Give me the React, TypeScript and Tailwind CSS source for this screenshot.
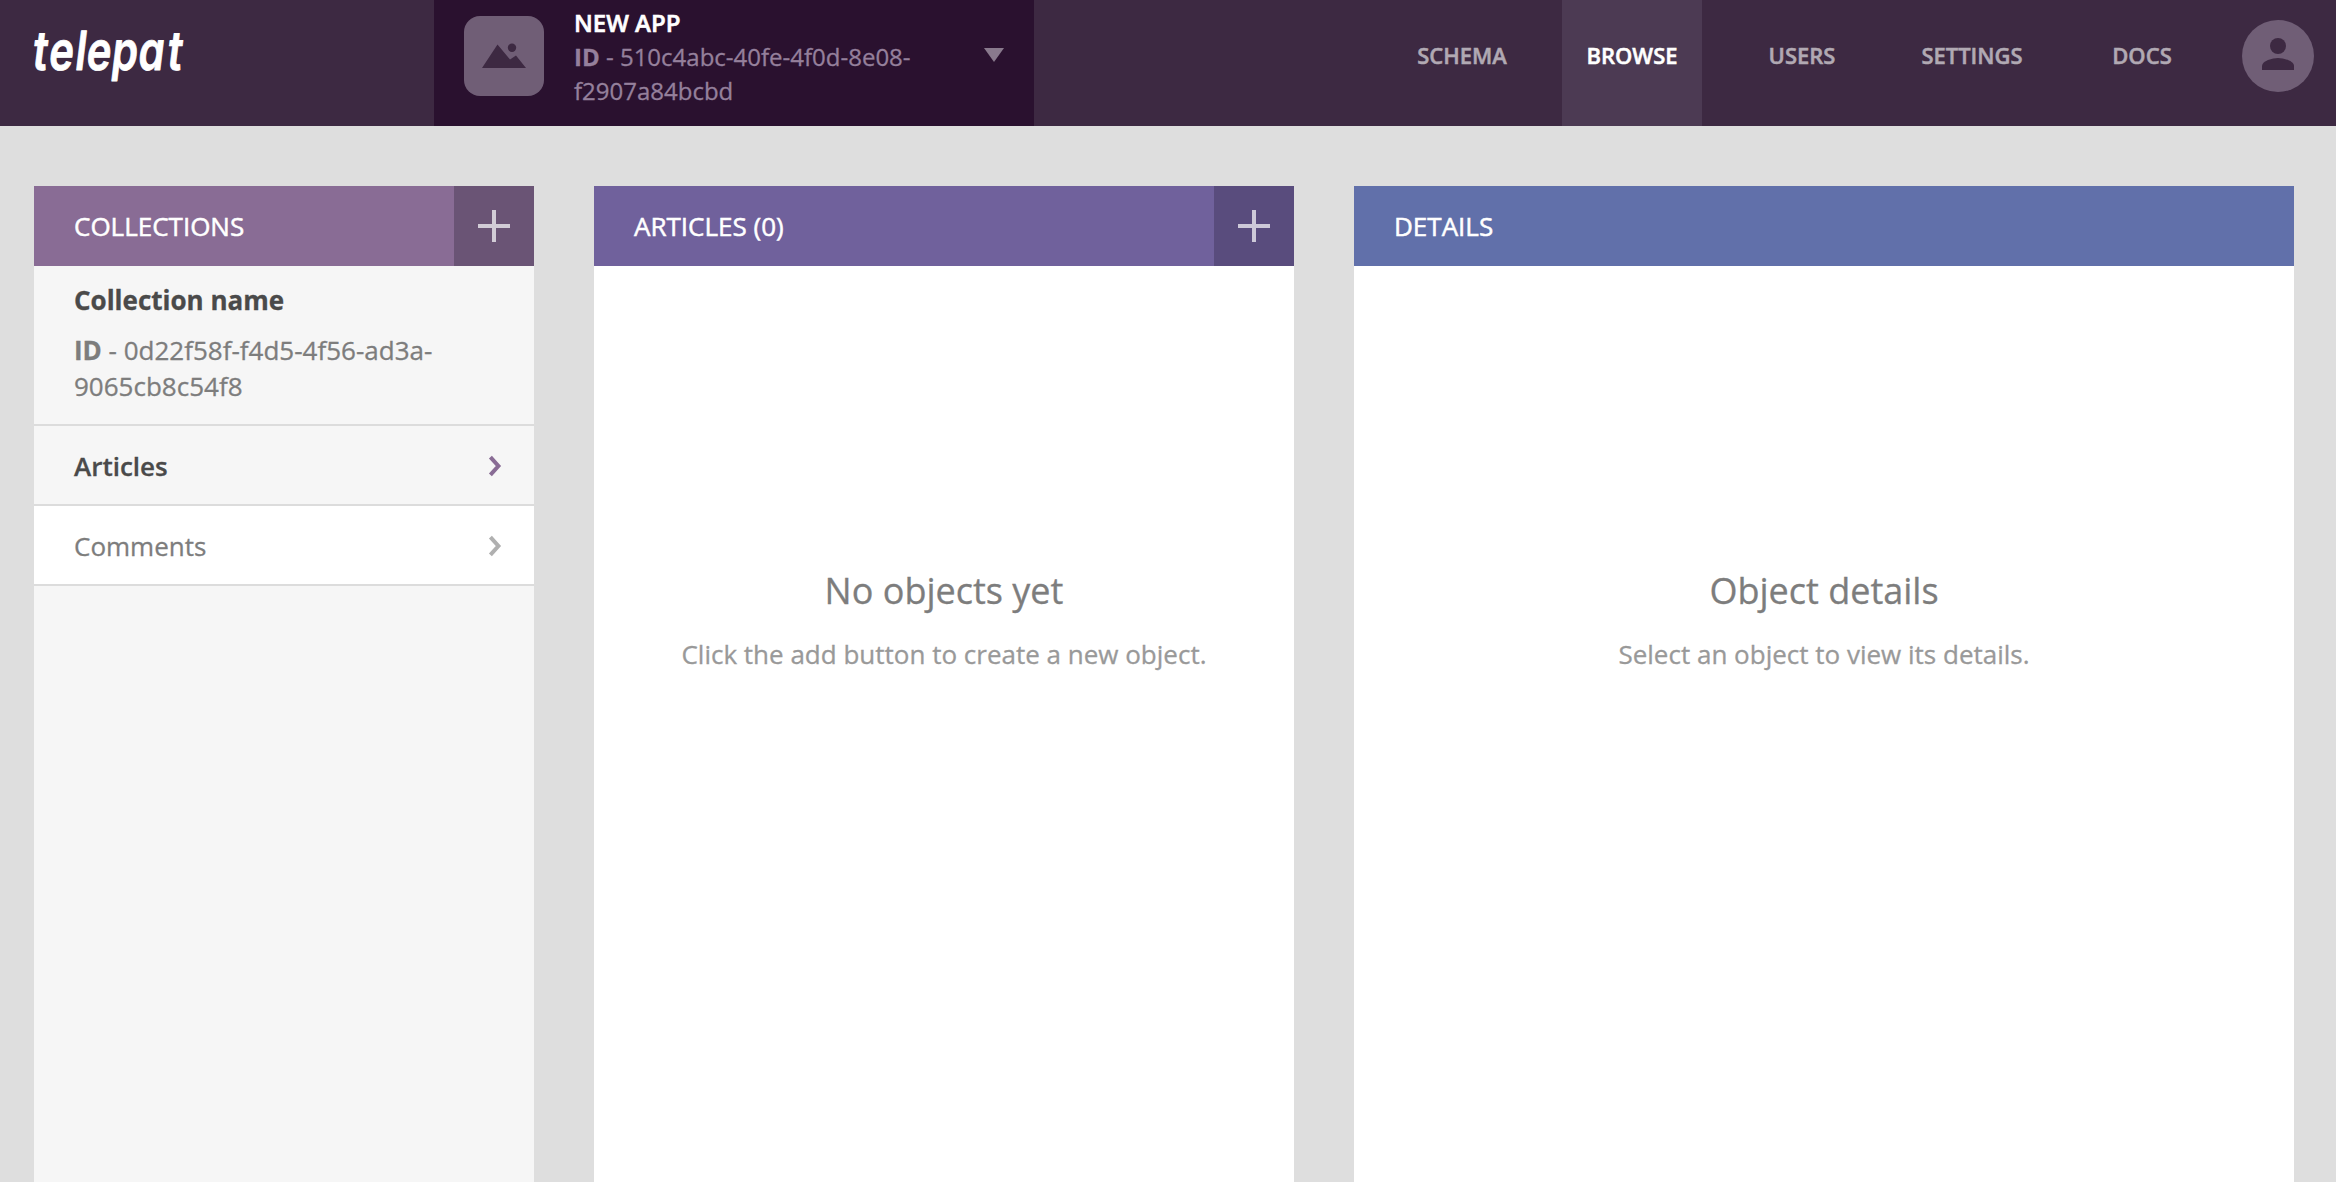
import type { ReactNode } from "react";

const navItems = ["SCHEMA", "BROWSE", "USERS", "SETTINGS", "DOCS"];

function Logo() {
  return (
    <svg width="170" height="80" viewBox="0 0 170 80" role="img" aria-label="telepat">
      <g transform="translate(10 54.3) skewX(-7) scale(0.77 1)">
        <text
          x="-3.6 17.7 51.6 66.2 99 133.5 171.3"
          y="0"
          fill="#fff"
          stroke="#fff"
          strokeWidth="0.9"
          strokeLinejoin="round"
          className="font-['Inter',sans-serif] text-[54px] font-semibold [font-feature-settings:'cv11']"
        >
          telepat
        </text>
      </g>
    </svg>
  );
}

function AppSelector() {
  return (
    <div className="flex h-full w-[600px] bg-[#2a112f] pl-[30px]">
      <svg className="mt-4 shrink-0" width="80" height="80" viewBox="0 0 80 80">
        <rect width="80" height="80" rx="16" fill="#705e76" />
        <path d="M18 52 33.5 28.5 46 43.5 52 39.5 62 52Z" fill="#3d2942" />
        <circle cx="48" cy="31.7" r="4.2" fill="#3d2942" />
      </svg>
      <div className="ml-[30px] w-[380px] pt-1.5 text-[24px] leading-[34px] text-[#95809c]">
        <div className="font-semibold text-white [-webkit-text-stroke:0.6px]">NEW APP</div>
        <div>
          <b>ID</b> - 510c4abc-40fe-4f0d-8e08-
          <br />
          f2907a84bcbd
        </div>
      </div>
      <svg className="mt-12 ml-[30px]" width="20" height="14" viewBox="0 0 20 14">
        <path d="M0 0H20L10 14Z" fill="#897a8d" />
      </svg>
    </div>
  );
}

function Avatar() {
  return (
    <svg className="mt-5 ml-[30px] shrink-0" width="72" height="72" viewBox="0 0 72 72">
      <circle cx="36" cy="36" r="36" fill="#705e76" />
      <circle cx="36" cy="26" r="8" fill="#3d2942" />
      <path d="M20 50v-4c0-5.3 10.7-8 16-8s16 2.7 16 8v4Z" fill="#3d2942" />
    </svg>
  );
}

function Header() {
  return (
    <header className="flex h-[126px] bg-[#3d2942]">
      <div className="w-[434px] pt-4 pl-6">
        <Logo />
      </div>
      <AppSelector />
      <nav className="ml-auto flex gap-[30px] [-webkit-text-stroke:0.5px]">
        {navItems.map((item) => (
          <a
            key={item}
            className={
              item === "BROWSE"
                ? "w-[140px] bg-[#4c3a53] text-center text-[22px] leading-[110px] font-semibold text-white"
                : "w-[140px] text-center text-[22px] leading-[110px] font-semibold text-[#b1a9b3]"
            }
          >
            {item}
          </a>
        ))}
      </nav>
      <div className="pr-[22px]">
        <Avatar />
      </div>
    </header>
  );
}

function AddButton({ className }: { className: string }) {
  return (
    <button className={className}>
      <svg width="32" height="32" viewBox="0 0 32 32">
        <path d="M14 0h4v14h14v4H18v14h-4V18H0v-4h14Z" fill="#fff" fillOpacity="0.7" />
      </svg>
    </button>
  );
}

function PanelHeader({ className, title, action }: { className: string; title: string; action?: ReactNode }) {
  return (
    <div className={className}>
      <h2 className="flex-1 pl-10 text-[26px] leading-[80px] text-white [-webkit-text-stroke:0.5px]">{title}</h2>
      {action}
    </div>
  );
}

function Chevron({ color }: { color: string }) {
  return (
    <svg width="14" height="22" viewBox="0 0 14 22" fill="none" stroke={color} strokeWidth="4">
      <path d="M2.4 2.2 10.4 11 2.4 19.8" />
    </svg>
  );
}

function EmptyState({ title, text }: { title: string; text: string }) {
  return (
    <div className="pt-[300px] text-center">
      <p className="text-[36px] leading-[49px] text-[#7d7d7d]">{title}</p>
      <p className="mt-[21px] text-[26px] leading-9 text-[#999999]">{text}</p>
    </div>
  );
}

export default function App() {
  return (
    <div className="flex h-[1182px] flex-col overflow-hidden bg-[#dedede] font-['Open_Sans',sans-serif] [-webkit-text-stroke:0.3px]">
      <Header />
      <main className="flex flex-1 pt-[60px] pr-[42px] pl-[34px]">
        <section className="w-[500px] bg-[#f6f6f6]">
          <PanelHeader
            className="flex h-20 bg-[#896c95]"
            title="COLLECTIONS"
            action={<AddButton className="flex w-20 items-center justify-center bg-[#6a5475]" />}
          />
          <div className="h-40 border-b-2 border-[#dcdcdc] px-10 pt-4 text-[26px] leading-9">
            <div className="font-bold text-[#4a4a4a]">Collection name</div>
            <div className="mt-3.5 text-[#7d7d7d]">
              <b>ID</b> - 0d22f58f-f4d5-4f56-ad3a-
              <br />
              9065cb8c54f8
            </div>
          </div>
          <div className="flex h-20 items-center justify-between border-b-2 border-[#dcdcdc] pt-0.5 pr-8 pl-10 text-[26px] font-semibold text-[#4a4a4a]">
            Articles
            <Chevron color="#896c95" />
          </div>
          <div className="flex h-20 items-center justify-between border-b-2 border-[#dcdcdc] bg-white pt-0.5 pr-8 pl-10 text-[26px] text-[#7d7d7d]">
            Comments
            <Chevron color="#b0b0b0" />
          </div>
        </section>
        <section className="ml-[60px] w-[700px] bg-white">
          <PanelHeader
            className="flex h-20 bg-[#70619c]"
            title="ARTICLES (0)"
            action={<AddButton className="flex w-20 items-center justify-center bg-[#594c7d]" />}
          />
          <EmptyState title="No objects yet" text="Click the add button to create a new object." />
        </section>
        <section className="ml-[60px] flex-1 bg-white">
          <PanelHeader className="flex h-20 bg-[#6170aa]" title="DETAILS" />
          <EmptyState title="Object details" text="Select an object to view its details." />
        </section>
      </main>
    </div>
  );
}
